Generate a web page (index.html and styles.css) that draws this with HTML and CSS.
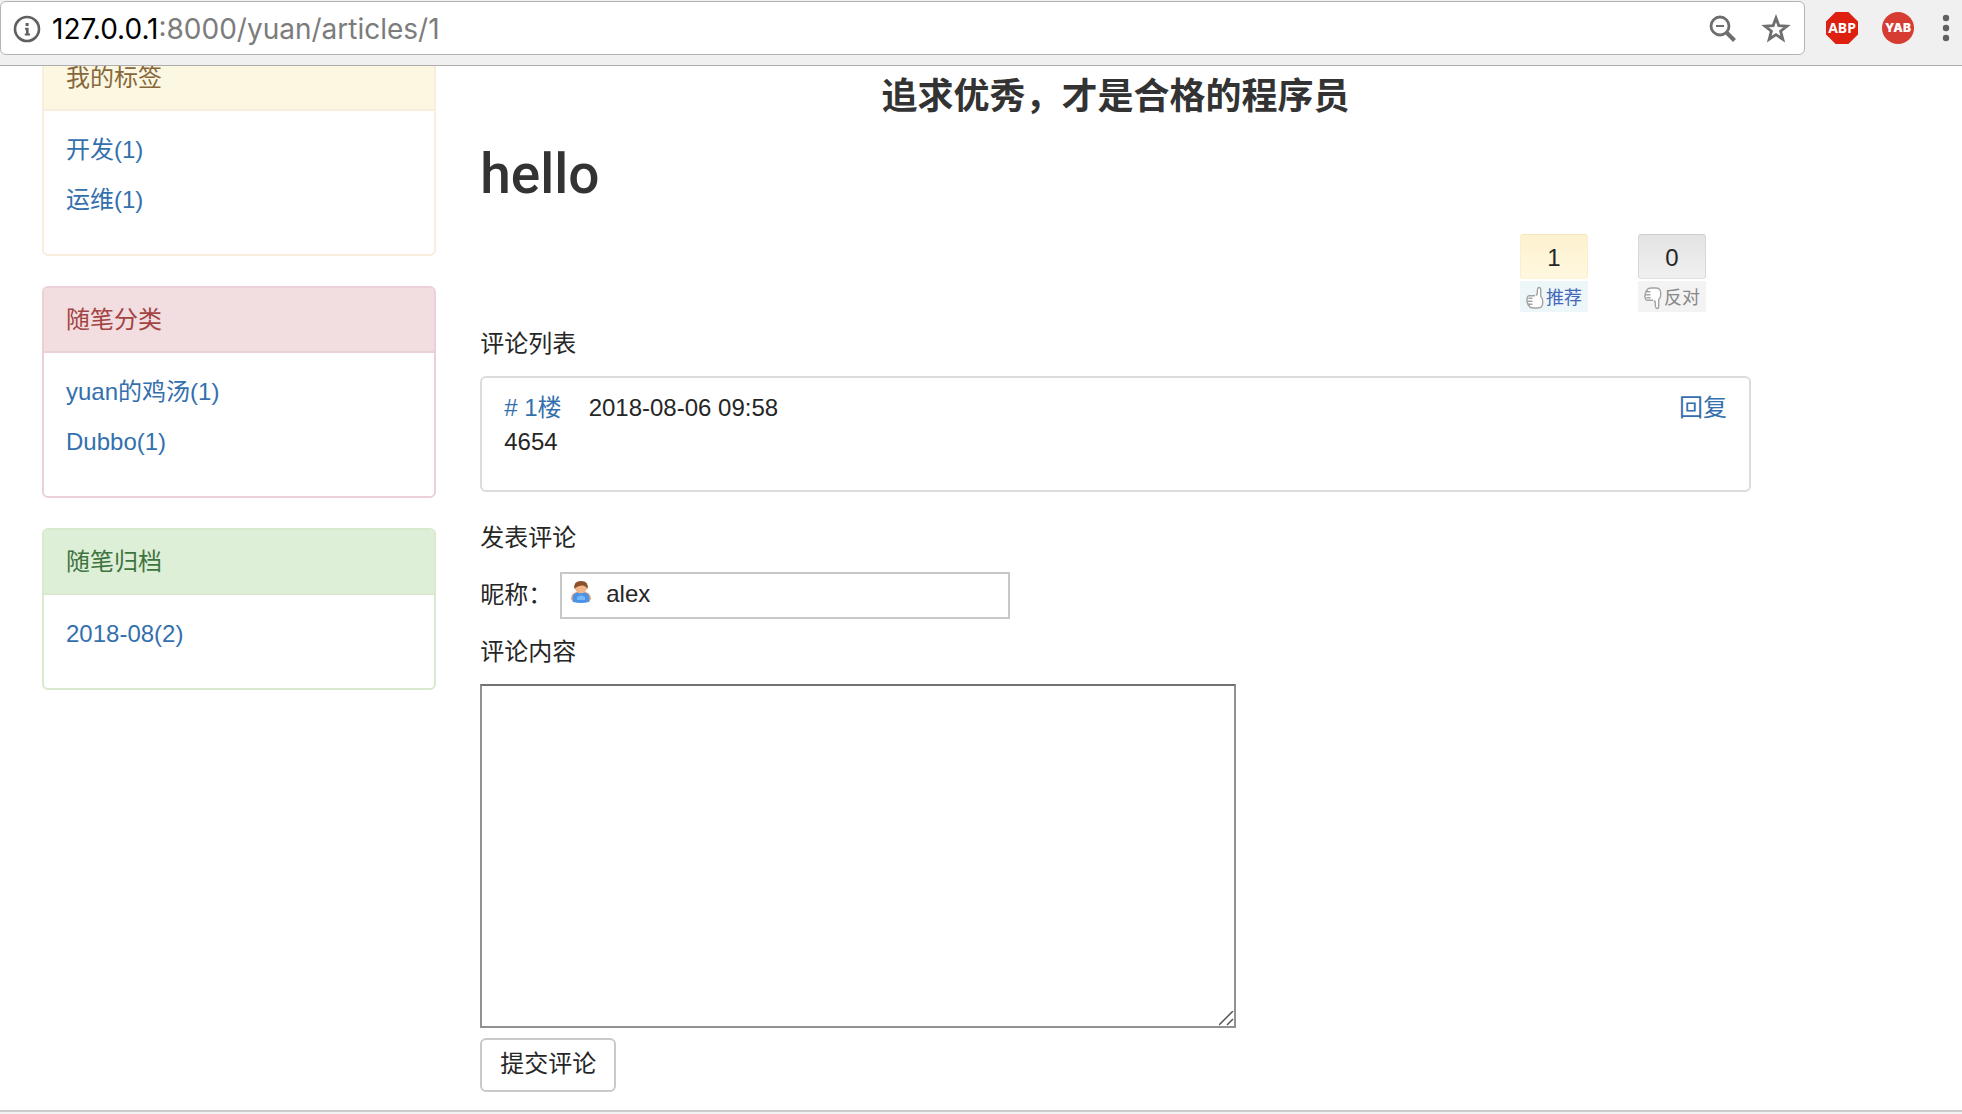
FILE: index.html
```html
<!DOCTYPE html>
<html lang="zh-CN">
<head>
<meta charset="utf-8">
<title>hello</title>
<link rel="stylesheet" href="styles.css">
</head>
<body>
<header class="toolbar">
  <div class="address">
    <svg class="icon-info" viewBox="0 0 28 28" aria-hidden="true"><circle cx="14" cy="14" r="12" fill="none" stroke="#5f6062" stroke-width="2.6"/><path d="M12.6 8h3v3h-3zM12 12.8h3.600v5.600H17v2h-5.200v-2h1.200v-3.600H12z" fill="#5f6062"/></svg>
    <p class="url"><span class="host">127.0.0.1</span>:8000/yuan/articles/1</p>
    <button class="tool" type="button" aria-label="缩小"><svg width="28" height="28" viewBox="0 0 28 28"><circle cx="11" cy="11" r="9" fill="none" stroke="#6e6e6e" stroke-width="2.800"/><path d="M7 11h8" stroke="#6e6e6e" stroke-width="2"/><path d="M17.500 17.500l8 8" stroke="#6e6e6e" stroke-width="4"/></svg></button>
    <button class="tool" type="button" aria-label="收藏"><svg width="30" height="30" viewBox="0 0 30 30"><path d="M15 4l2.800 7.600 8.200.5-6.400 5.100 2.200 8L15 20.700 8.200 25.200l2.200-8L4 12.100l8.200-.5z" fill="none" stroke="#6e6e6e" stroke-width="2.800"/></svg></button>
  </div>
  <div class="extensions">
    <button class="abp" type="button">ABP</button>
    <button class="yab" type="button">YAB</button>
    <button class="more" type="button" aria-label="菜单"><svg width="8" height="28" viewBox="0 0 8 28"><g fill="#5f6062"><circle cx="4" cy="4" r="3.200"/><circle cx="4" cy="14" r="3.200"/><circle cx="4" cy="24" r="3.200"/></g></svg></button>
  </div>
</header>
<div class="viewport">
  <div class="row">
    <aside class="side">
      <section class="panel panel-warning">
        <h3 class="panel-heading">我的标签</h3>
        <div class="panel-body"><p><a href="#">开发(1)</a></p><p><a href="#">运维(1)</a></p></div>
      </section>
      <section class="panel panel-danger">
        <h3 class="panel-heading">随笔分类</h3>
        <div class="panel-body"><p><a href="#">yuan的鸡汤(1)</a></p><p><a href="#">Dubbo(1)</a></p></div>
      </section>
      <section class="panel panel-success">
        <h3 class="panel-heading">随笔归档</h3>
        <div class="panel-body"><p><a href="#">2018-08(2)</a></p></div>
      </section>
    </aside>
    <main class="main">
      <h3 class="slogan">追求优秀，才是合格的程序员</h3>
      <h1 class="title">hello</h1>
      <div class="votes">
        <button class="vote vote-up" type="button">
          <span class="count">1</span>
          <span class="caption"><svg width="18" height="24" viewBox="0 0 18 24"><path d="M10 9.500L11.300 8Q11 1.500 13 1.500T14.700 5v5.500q2 1.500 2 4.500v2q0 5-5 5H7.500q-4 0-4.500-2.500-1.500-.5-1-2-1.500-1-.5-2.500-1.500-1.500 0-2.800Q1 9.800 3.500 9.800H9M2.500 12.300h4M2 15.200h4.500M2.500 18.200h4" fill="#fff" stroke="#a3a3a3" stroke-width="1.400"/></svg>推荐</span>
        </button>
        <button class="vote vote-down" type="button">
          <span class="count">0</span>
          <span class="caption"><svg width="18" height="24" viewBox="0 0 18 24"><path d="M10 14.500l1.300 1.500q-.3 6.500 1.700 6.500t1.700-3.500v-5.500q2-1.500 2-4.500V7q0-5-5-5H7.500Q3.500 2 3 4.500q-1.500.5-1 2-1.500 1-.5 2.500-1.500 1.500 0 2.800-.5 2.400 2 2.400H9M2.500 11.700h4M2 8.800h4.500M2.500 5.800h4" fill="#fff" stroke="#a3a3a3" stroke-width="1.400"/></svg>反对</span>
        </button>
      </div>
      <p class="list-title">评论列表</p>
      <ul class="comments">
        <li class="comment">
          <div class="comment-head"><a href="#"># 1楼</a><time>2018-08-06 09:58</time><a class="reply" href="#">回复</a></div>
          <p>4654</p>
        </li>
      </ul>
      <form class="post">
        <p>发表评论</p>
        <div class="nick">
          <label for="author">昵称：</label>
          <span class="field">
            <input id="author" type="text" value="alex">
            <svg class="avatar" width="22" height="24" viewBox="0 0 22 24" aria-hidden="true"><path d="M1 19q0-6 6-7h8q6 1 6 7l-2 3H3z" fill="#e5a277"/><path d="M3 22q-2-8 4-9.500h8q6 1.500 4 9.500-8 2-16 0z" fill="#4a93e6"/><path d="M7 17q4-3 8 0v3H7z" fill="#78b8fa"/><ellipse cx="11" cy="7.800" rx="6" ry="5.500" fill="#f0b58a"/><path d="M4.500 9Q3 1 11 1t6.500 8q-2-3.500-5-3.500-5 0-8 3.500z" fill="#8b5028"/></svg>
          </span>
        </div>
        <label class="content-label" for="content">评论内容</label>
        <textarea id="content"></textarea>
        <button class="submit" type="button">提交评论</button>
      </form>
    </main>
  </div>
</div>
<footer class="edge"></footer>
</body>
</html>
```
FILE: styles.css
```css
* { box-sizing: border-box; }
body {
  margin: 0;
  min-height: 100vh;
  display: flex;
  flex-direction: column;
  background: #fff;
  color: #262626;
  font: 24px/34px "Liberation Sans", "Noto Sans CJK SC", sans-serif;
}
p, h1, h3, ul { margin: 0; padding: 0; }
a { color: #3470ad; text-decoration: none; }
button, input, textarea { font: inherit; color: inherit; }
button { padding: 0; border: 0; background: none; }

.toolbar {
  height: 66px;
  padding: 1px 12px 10px 0;
  display: flex;
  background: #f0f0f0;
  border-bottom: 1px solid #adadad;
}
.address {
  flex: 1;
  display: flex;
  align-items: center;
  gap: 24px;
  padding: 2px 13px 0 12px;
  background: #fff;
  border: 1px solid #b4b4b4;
  border-radius: 6px;
}
.icon-info { width: 28px; height: 28px; }
.url {
  flex: 1;
  margin-left: -13px;
  color: #7c7c7c;
  font: 28px/40px Inter, sans-serif;
}
.host { color: #000; }
.tool, .more { display: flex; }
.extensions {
  display: flex;
  align-items: center;
  gap: 24px;
  padding-left: 21px;
}
.abp, .yab {
  width: 32px;
  height: 32px;
  color: #fff;
  text-align: center;
}
.abp {
  background: #dd2010;
  clip-path: polygon(30% 0, 70% 0, 100% 30%, 100% 70%, 70% 100%, 30% 100%, 0 70%, 0 30%);
  font: bold 14px/32px "Noto Sans", sans-serif;
}
.yab {
  background: #d63c32;
  border-radius: 50%;
  font: 900 12px/32px Inter, sans-serif;
}
.more { margin-left: 4px; }

.viewport { flex: 1; overflow: hidden; }
.row {
  display: flex;
  margin: -22px 189px 0 20px;
}
.side { width: 25%; padding: 0 22px; }
.main { width: 75%; padding: 33px 22px 18px; }

.panel {
  margin-bottom: 30px;
  border: 2px solid;
  border-radius: 6px;
  overflow: hidden;
}
.panel-heading {
  padding: 15px 22px 14px;
  border-bottom: 2px solid;
  border-color: inherit;
  font-size: 24px;
  font-weight: 400;
}
.panel-body { padding: 22px 22px 21px; }
.panel-body p { margin-bottom: 16px; }
.panel-warning { border-color: #faeddd; }
.panel-warning .panel-heading { background: #fcf7e1; color: #87683c; }
.panel-danger { border-color: #ebd1d7; }
.panel-danger .panel-heading { background: #f2dde0; color: #a34443; }
.panel-success { border-color: #d9e9cd; }
.panel-success .panel-heading { background: #deefd8; color: #3e743f; }

.slogan {
  color: #333;
  font-size: 36px;
  line-height: 40px;
  text-align: center;
}
.title {
  margin: 27px 0 30px;
  color: #333;
  font: 500 55px/60px Roboto, sans-serif;
}
.votes {
  display: flex;
  justify-content: flex-end;
  gap: 50px;
  padding-right: 45px;
}
.vote { width: 68px; }
.count {
  display: block;
  height: 45px;
  margin-bottom: 2px;
  border: 1px solid;
  border-radius: 3px;
  line-height: 46px;
}
.caption {
  height: 31px;
  display: flex;
  align-items: center;
  justify-content: center;
  gap: 2px;
  padding-top: 2px;
  font-size: 18px;
  line-height: 30px;
}
.vote-up .count { background: linear-gradient(#fdf2cf, #fff7e0); border-color: #f7e6b8 #fbeecb #fdf3d8; }
.vote-up .caption { background: #edf6f8; color: #4467b9; }
.vote-down .count { background: linear-gradient(#e3e3e3, #f0f0f0); border-color: #ccc #d8d8d8 #e0e0e0; }
.vote-down .caption { background: #f3f3f3; color: #888; }

.list-title { margin: 15px 0 15px; }
.comments { margin-bottom: 29px; list-style: none; }
.comment {
  padding: 13px 22px 31px;
  border: 2px solid #dcdcdc;
  border-radius: 6px;
}
.comment-head { display: flex; gap: 27px; }
.reply { margin-left: auto; }

.post { display: flex; flex-direction: column; align-items: flex-start; }
.nick { display: flex; align-items: center; margin: 17px 0 16px; }
.nick label { width: 80px; padding-bottom: 2px; }
.field { position: relative; display: flex; }
.field input {
  width: 450px;
  height: 47px;
  padding: 0 8px 3px 44px;
  border: 2px solid #c8c8c8;
  outline: 0;
}
.avatar { position: absolute; left: 10px; top: 8px; }
.post textarea {
  width: 756px;
  height: 344px;
  margin: 15px 0 10px;
  border: 2px solid #919191;
  border-top-color: #727272;
}
.post textarea::-webkit-resizer {
  background: url("data:image/svg+xml,%3Csvg xmlns='http://www.w3.org/2000/svg' width='15' height='15'%3E%3Cpath d='M0 14L14 0M8 14L14 8' stroke='%23555' stroke-width='1.500'/%3E%3C/svg%3E") no-repeat;
}
.submit {
  height: 54px;
  padding: 0 18px 3px;
  border: 2px solid #c9c9c9;
  border-radius: 6px;
}
.edge {
  height: 4px;
  border-top: 2px solid #ccc;
  background: #f2f2f2;
}
```
